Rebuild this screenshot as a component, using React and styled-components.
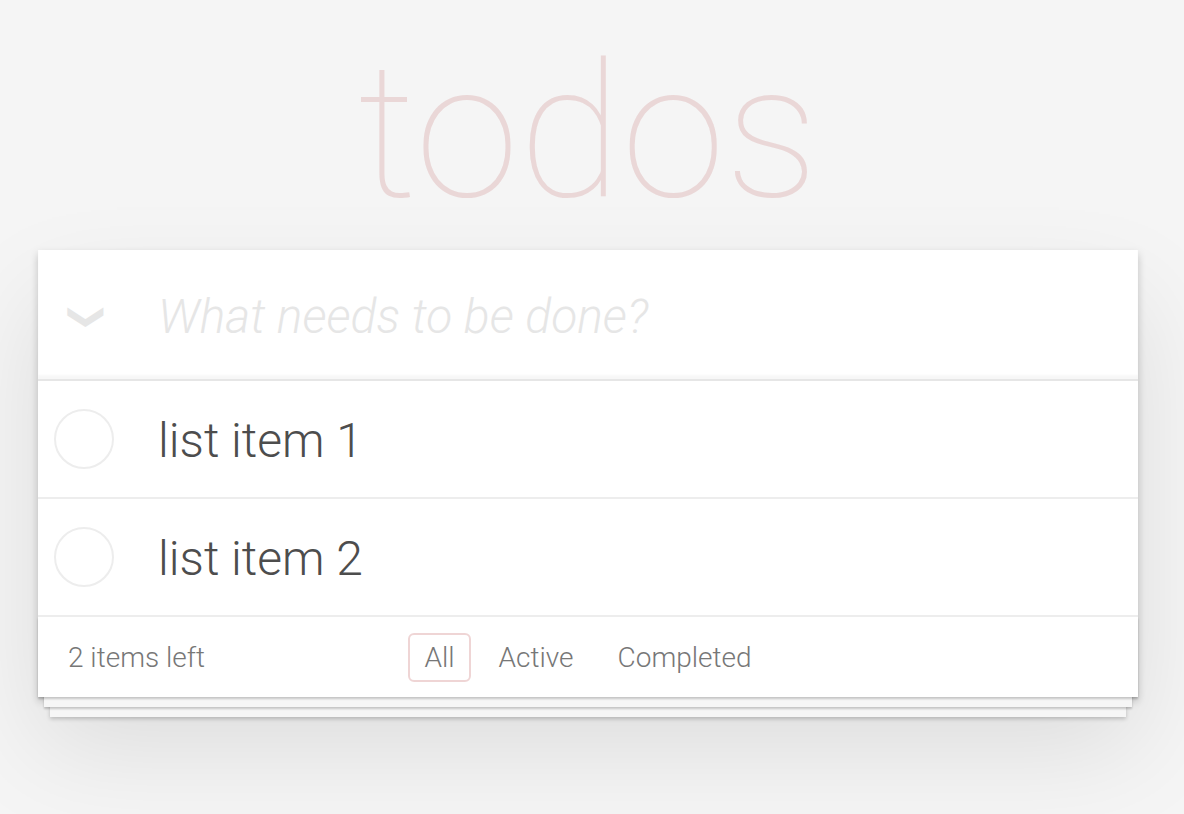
import React from 'react'
import styled, { createGlobalStyle } from 'styled-components'

const Global = createGlobalStyle`
html {
  background: #f5f5f5;
}
body {
  margin: 0;
  padding: 0;
  font-family: "Helvetica Neue", Roboto, "Liberation Sans", sans-serif;
  font-weight: 300;
  color: #4d4d4d;
  -webkit-font-smoothing: antialiased;
}
`

const Page = styled.div`
width: 1100px;
margin: 0 auto;
padding-right: 8px;
padding-bottom: 140px;
`

const Title = styled.h1`
margin: 0;
height: 250px;
padding-top: 38px;
box-sizing: border-box;
text-align: center;
font-family: Roboto, "Helvetica Neue", sans-serif;
font-size: 188px;
line-height: 188px;
font-weight: 100;
color: rgba(175, 47, 47, 0.15);
`

const Card = styled.section`
background: #fff;
box-shadow: 0 4px 8px 0 rgba(0, 0, 0, 0.2), 0 50px 100px 0 rgba(0, 0, 0, 0.1);
`

const Header = styled.div`
display: flex;
align-items: center;
height: 131px;
box-shadow: inset 0 -4px 2px rgba(0, 0, 0, 0.03);
border-bottom: 2px solid #e6e6e6;
box-sizing: border-box;
`

const ToggleAll = styled.span`
width: 100px;
margin-right: 20px;
margin-top: 4px;
text-align: center;
font-size: 36px;
color: #e6e6e6;
transform: rotate(90deg);
display: inline-block;
line-height: 1;
`

const NewTodo = styled.input`
flex: 1;
border: none;
outline: none;
background: transparent;
font-family: inherit;
font-size: 48px;
font-weight: 300;
color: #4d4d4d;
padding: 4px 0 0;
&::placeholder {
  font-style: italic;
  color: #e6e6e6;
}
`

const Item = styled.div`
display: flex;
align-items: center;
height: 118px;
border-bottom: 2px solid #ededed;
box-sizing: border-box;
`

const Check = styled.span`
width: 60px;
height: 60px;
margin: 0 44px 0 16px;
border: 2px solid #ededed;
border-radius: 50%;
box-sizing: border-box;
`

const Label = styled.span`
font-size: 48px;
color: #4d4d4d;
padding-top: 3px;
`

const Footer = styled.footer`
display: grid;
grid-template-columns: 1fr auto 1fr;
align-items: center;
height: 80px;
padding: 0 30px;
box-sizing: border-box;
font-size: 28px;
color: #777;
box-shadow: 0 2px 2px rgba(0, 0, 0, 0.2), 0 16px 0 -6px #f6f6f6,
  0 18px 2px -6px rgba(0, 0, 0, 0.2), 0 32px 0 -12px #f6f6f6,
  0 34px 4px -12px rgba(0, 0, 0, 0.2);
`

const Filters = styled.div`
display: flex;
gap: 12px;
`

const Filter = styled.a`
padding: 6px 14px;
border-radius: 6px;
border: 2px solid ${p => (p.selected ? 'rgba(175, 47, 47, 0.2)' : 'transparent')};
color: inherit;
text-decoration: none;
`

const items = ['list item 1', 'list item 2']

export default function App() {
  return (
    <Page>
      <Global />
      <Title>todos</Title>
      <Card>
        <Header>
          <ToggleAll>❯</ToggleAll>
          <NewTodo placeholder="What needs to be done?" />
        </Header>
        {items.map(t => (
          <Item key={t}>
            <Check />
            <Label>{t}</Label>
          </Item>
        ))}
        <Footer>
          <span>2 items left</span>
          <Filters>
            <Filter selected>All</Filter>
            <Filter>Active</Filter>
            <Filter>Completed</Filter>
          </Filters>
          <span />
        </Footer>
      </Card>
    </Page>
  )
}
